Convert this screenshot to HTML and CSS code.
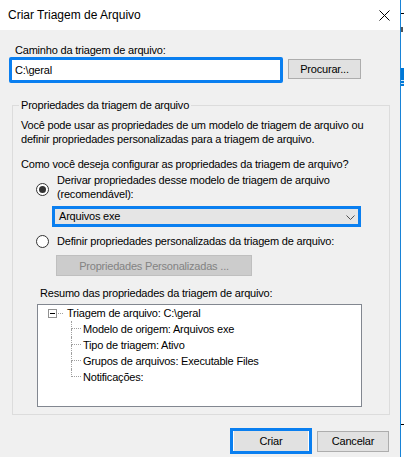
FILE: index.html
```html
<!DOCTYPE html>
<html lang="pt-BR">
<head>
<meta charset="utf-8">
<title>Criar Triagem de Arquivo</title>
<link rel="stylesheet" href="styles.css">
</head>
<body>
<div class="screen">
  <div class="dialog">
    <div class="titlebar">
      <span class="title">Criar Triagem de Arquivo</span>
      <svg class="close" width="11" height="11" viewBox="0 0 11 11"><path d="M0.5 0.5 L10.5 10.5 M10.5 0.5 L0.5 10.5" stroke="#000" stroke-width="1" fill="none"/></svg>
    </div>
    <div class="content">
      <div class="path-label">Caminho da triagem de arquivo:</div>
      <div class="path-row">
        <div class="textbox">C:\geral</div>
        <div class="btn browse">Procurar...</div>
      </div>
      <div class="group">
        <div class="group-title">Propriedades da triagem de arquivo</div>
        <div class="group-body">
          <p class="intro">Você pode usar as propriedades de um modelo de triagem de arquivo ou<br>definir propriedades personalizadas para a triagem de arquivo.</p>
          <p class="question">Como você deseja configurar as propriedades da triagem de arquivo?</p>
          <div class="radio-row first">
            <span class="radio checked"></span>
            <span class="radio-label">Derivar propriedades desse modelo de triagem de arquivo<br>(recomendável):</span>
          </div>
          <div class="combo">
            <span class="combo-text">Arquivos exe</span>
            <svg class="chevron" width="9" height="5" viewBox="0 0 9 5"><path d="M0.5 0.5 L4.5 4.5 L8.5 0.5" stroke="#505050" stroke-width="1" fill="none"/></svg>
          </div>
          <div class="radio-row second">
            <span class="radio"></span>
            <span class="radio-label">Definir propriedades personalizadas da triagem de arquivo:</span>
          </div>
          <div class="btn disabled custom">Propriedades Personalizadas ...</div>
          <div class="summary-label">Resumo das propriedades da triagem de arquivo:</div>
          <div class="tree">
            <div class="tree-root">
              <span class="expander"><span class="minus"></span></span>
              <span class="root-link"></span>
              <span class="tree-text">Triagem de arquivo: C:\geral</span>
            </div>
            <div class="tree-children">
              <div class="tree-item">
                <span class="conn"><span class="conn-top"></span><span class="conn-bottom"></span></span>
                <span class="tree-text">Modelo de origem: Arquivos exe</span>
              </div>
              <div class="tree-item">
                <span class="conn"><span class="conn-top"></span><span class="conn-bottom"></span></span>
                <span class="tree-text">Tipo de triagem: Ativo</span>
              </div>
              <div class="tree-item">
                <span class="conn"><span class="conn-top"></span><span class="conn-bottom"></span></span>
                <span class="tree-text">Grupos de arquivos: Executable Files</span>
              </div>
              <div class="tree-item last">
                <span class="conn"><span class="conn-top"></span><span class="conn-bottom"></span></span>
                <span class="tree-text">Notificações:</span>
              </div>
            </div>
          </div>
        </div>
      </div>
      <div class="footer">
        <div class="btn default">Criar</div>
        <div class="btn cancel">Cancelar</div>
      </div>
    </div>
  </div>
  <div class="edge">
    <span class="edge-dash"></span>
    <span class="edge-glyph"></span>
    <span class="edge-blue"><span class="edge-line"></span><span class="edge-line"></span></span>
    <span class="edge-dash low"></span>
  </div>
</div>
</body>
</html>
```

FILE: styles.css
```css
* { box-sizing: border-box; }
html, body { margin: 0; padding: 0; }
body {
  width: 404px;
  height: 457px;
  overflow: hidden;
  background: #ffffff;
  font-family: "Liberation Sans", Arial, sans-serif;
  font-size: 11px;
  letter-spacing: -0.2px;
  color: #000;
}
.screen {
  display: flex;
  width: 404px;
  height: 457px;
}
.dialog {
  width: 401px;
  height: 457px;
  background: #f0f0f0;
  border-right: 1px solid #1883d7;
  display: flex;
  flex-direction: column;
}
.titlebar {
  height: 30px;
  flex: none;
  background: #ffffff;
  display: flex;
  align-items: center;
  justify-content: space-between;
  padding: 0 10px 0 8px;
}
.title {
  font-size: 12px;
  letter-spacing: 0;
  line-height: 30px;
}
.close { display: block; margin-top: 0; }

.content {
  padding-left: 9px;
}
.path-label {
  margin-top: 14px;
  padding-left: 6px;
  line-height: 13px;
}
.path-row {
  display: flex;
  align-items: flex-start;
}
.textbox {
  width: 274px;
  height: 26px;
  border: 3px solid #0a7ff0;
  border-radius: 2px;
  background: #fff;
  padding-left: 3px;
  line-height: 20px;
}
.btn {
  background: #e1e1e1;
  border: 1px solid #adadad;
  display: flex;
  align-items: center;
  justify-content: center;
  line-height: 14px;
}
.browse {
  width: 73px;
  height: 20px;
  margin: 2px 0 0 5px;
}

.group {
  margin: 22px 0 0 3px;
  width: 378px;
  height: 310px;
  border: 1px solid #dcdcdc;
}
.group-title {
  width: fit-content;
  margin: -7px 0 0 6px;
  padding: 0 2px;
  background: #f0f0f0;
  line-height: 13px;
}
.group-body {
  padding-left: 8px;
}
.intro {
  margin: 6px 0 0 0;
  line-height: 14px;
}
.question {
  margin: 11px 0 0 0;
  line-height: 14px;
}
.radio-row {
  display: flex;
  align-items: flex-start;
  line-height: 14px;
}
.radio-row.first { margin-top: 2px; }
.radio-row.second { margin-top: 7px; }
.radio {
  flex: none;
  width: 13px;
  height: 13px;
  border: 1px solid #333;
  border-radius: 50%;
  background: #fff;
  margin: 10px 8px 0 15px;
  display: flex;
  align-items: center;
  justify-content: center;
}
.radio-row.second .radio { margin-top: 1px; }
.radio.checked::after {
  content: "";
  width: 7px;
  height: 7px;
  border-radius: 50%;
  background: #333;
}
.combo {
  margin: 5px 0 0 31px;
  width: 309px;
  height: 21px;
  border: 3px solid #0a7ff0;
  background: #e5e5e5;
  display: flex;
  align-items: center;
  justify-content: space-between;
  padding: 0 3px 0 4px;
  line-height: 15px;
}
.chevron { display: block; margin-top: 1px; }
.custom {
  margin: 7px 0 0 35px;
  width: 196px;
  height: 21px;
  background: #cccccc;
  border-color: #bfbfbf;
  color: #838383;
}
.summary-label {
  margin: 10px 0 0 19px;
  line-height: 14px;
}
.tree {
  margin: 4px 0 0 16px;
  width: 325px;
  height: 103px;
  border: 1px solid #828790;
  background: #fff;
}
.tree-root {
  display: flex;
  align-items: center;
  height: 16px;
  padding-left: 10px;
  line-height: 16px;
}
.expander {
  width: 9px;
  height: 9px;
  border: 1px solid #919191;
  background: #fff;
  display: flex;
  align-items: center;
  justify-content: center;
  flex: none;
}
.minus {
  width: 5px;
  height: 1px;
  background: #000;
}
.root-link {
  width: 5px;
  margin: 0 2px 0 1px;
  border-top: 1px dotted #a0a0a0;
}
.tree-children {
  padding-left: 33px;
}
.tree-item {
  display: flex;
  height: 16px;
  line-height: 16px;
}
.conn {
  width: 10px;
  display: flex;
  flex-direction: column;
  flex: none;
}
.conn-top {
  height: 8px;
  border-left: 1px dotted #a0a0a0;
  border-bottom: 1px dotted #a0a0a0;
}
.conn-bottom {
  flex: 1;
  border-left: 1px dotted #a0a0a0;
}
.tree-item.last .conn-bottom { border-left: 0; }
.tree-text {
  margin-left: 2px;
  white-space: nowrap;
}

.footer {
  margin-top: 13px;
  display: flex;
  justify-content: flex-end;
  align-items: center;
  gap: 5px;
  padding-right: 11px;
}
.default {
  width: 82px;
  height: 26px;
  border: 3px solid #0a7ff0;
  box-shadow: inset 1px 0 0 #fff, inset -1px 0 0 #fff;
  line-height: 20px;
}
.cancel {
  width: 72px;
  height: 21px;
}

.edge {
  width: 3px;
  height: 457px;
  display: flex;
  flex-direction: column;
  background: #fff;
}
.edge-dash {
  display: block;
  height: 1px;
  background: #000;
  margin-top: 13px;
}
.edge-dash.low { margin-top: 338px; }
.edge-glyph {
  display: block;
  width: 2px;
  height: 5px;
  margin-top: 13px;
  background: #555;
}
.edge-blue {
  display: flex;
  flex-direction: column;
  height: 18px;
  margin-top: 36px;
  background: #0078d7;
  padding-top: 12px;
  gap: 2px;
}
.edge-line {
  display: block;
  height: 1px;
  background: #cfe6f8;
}
```
